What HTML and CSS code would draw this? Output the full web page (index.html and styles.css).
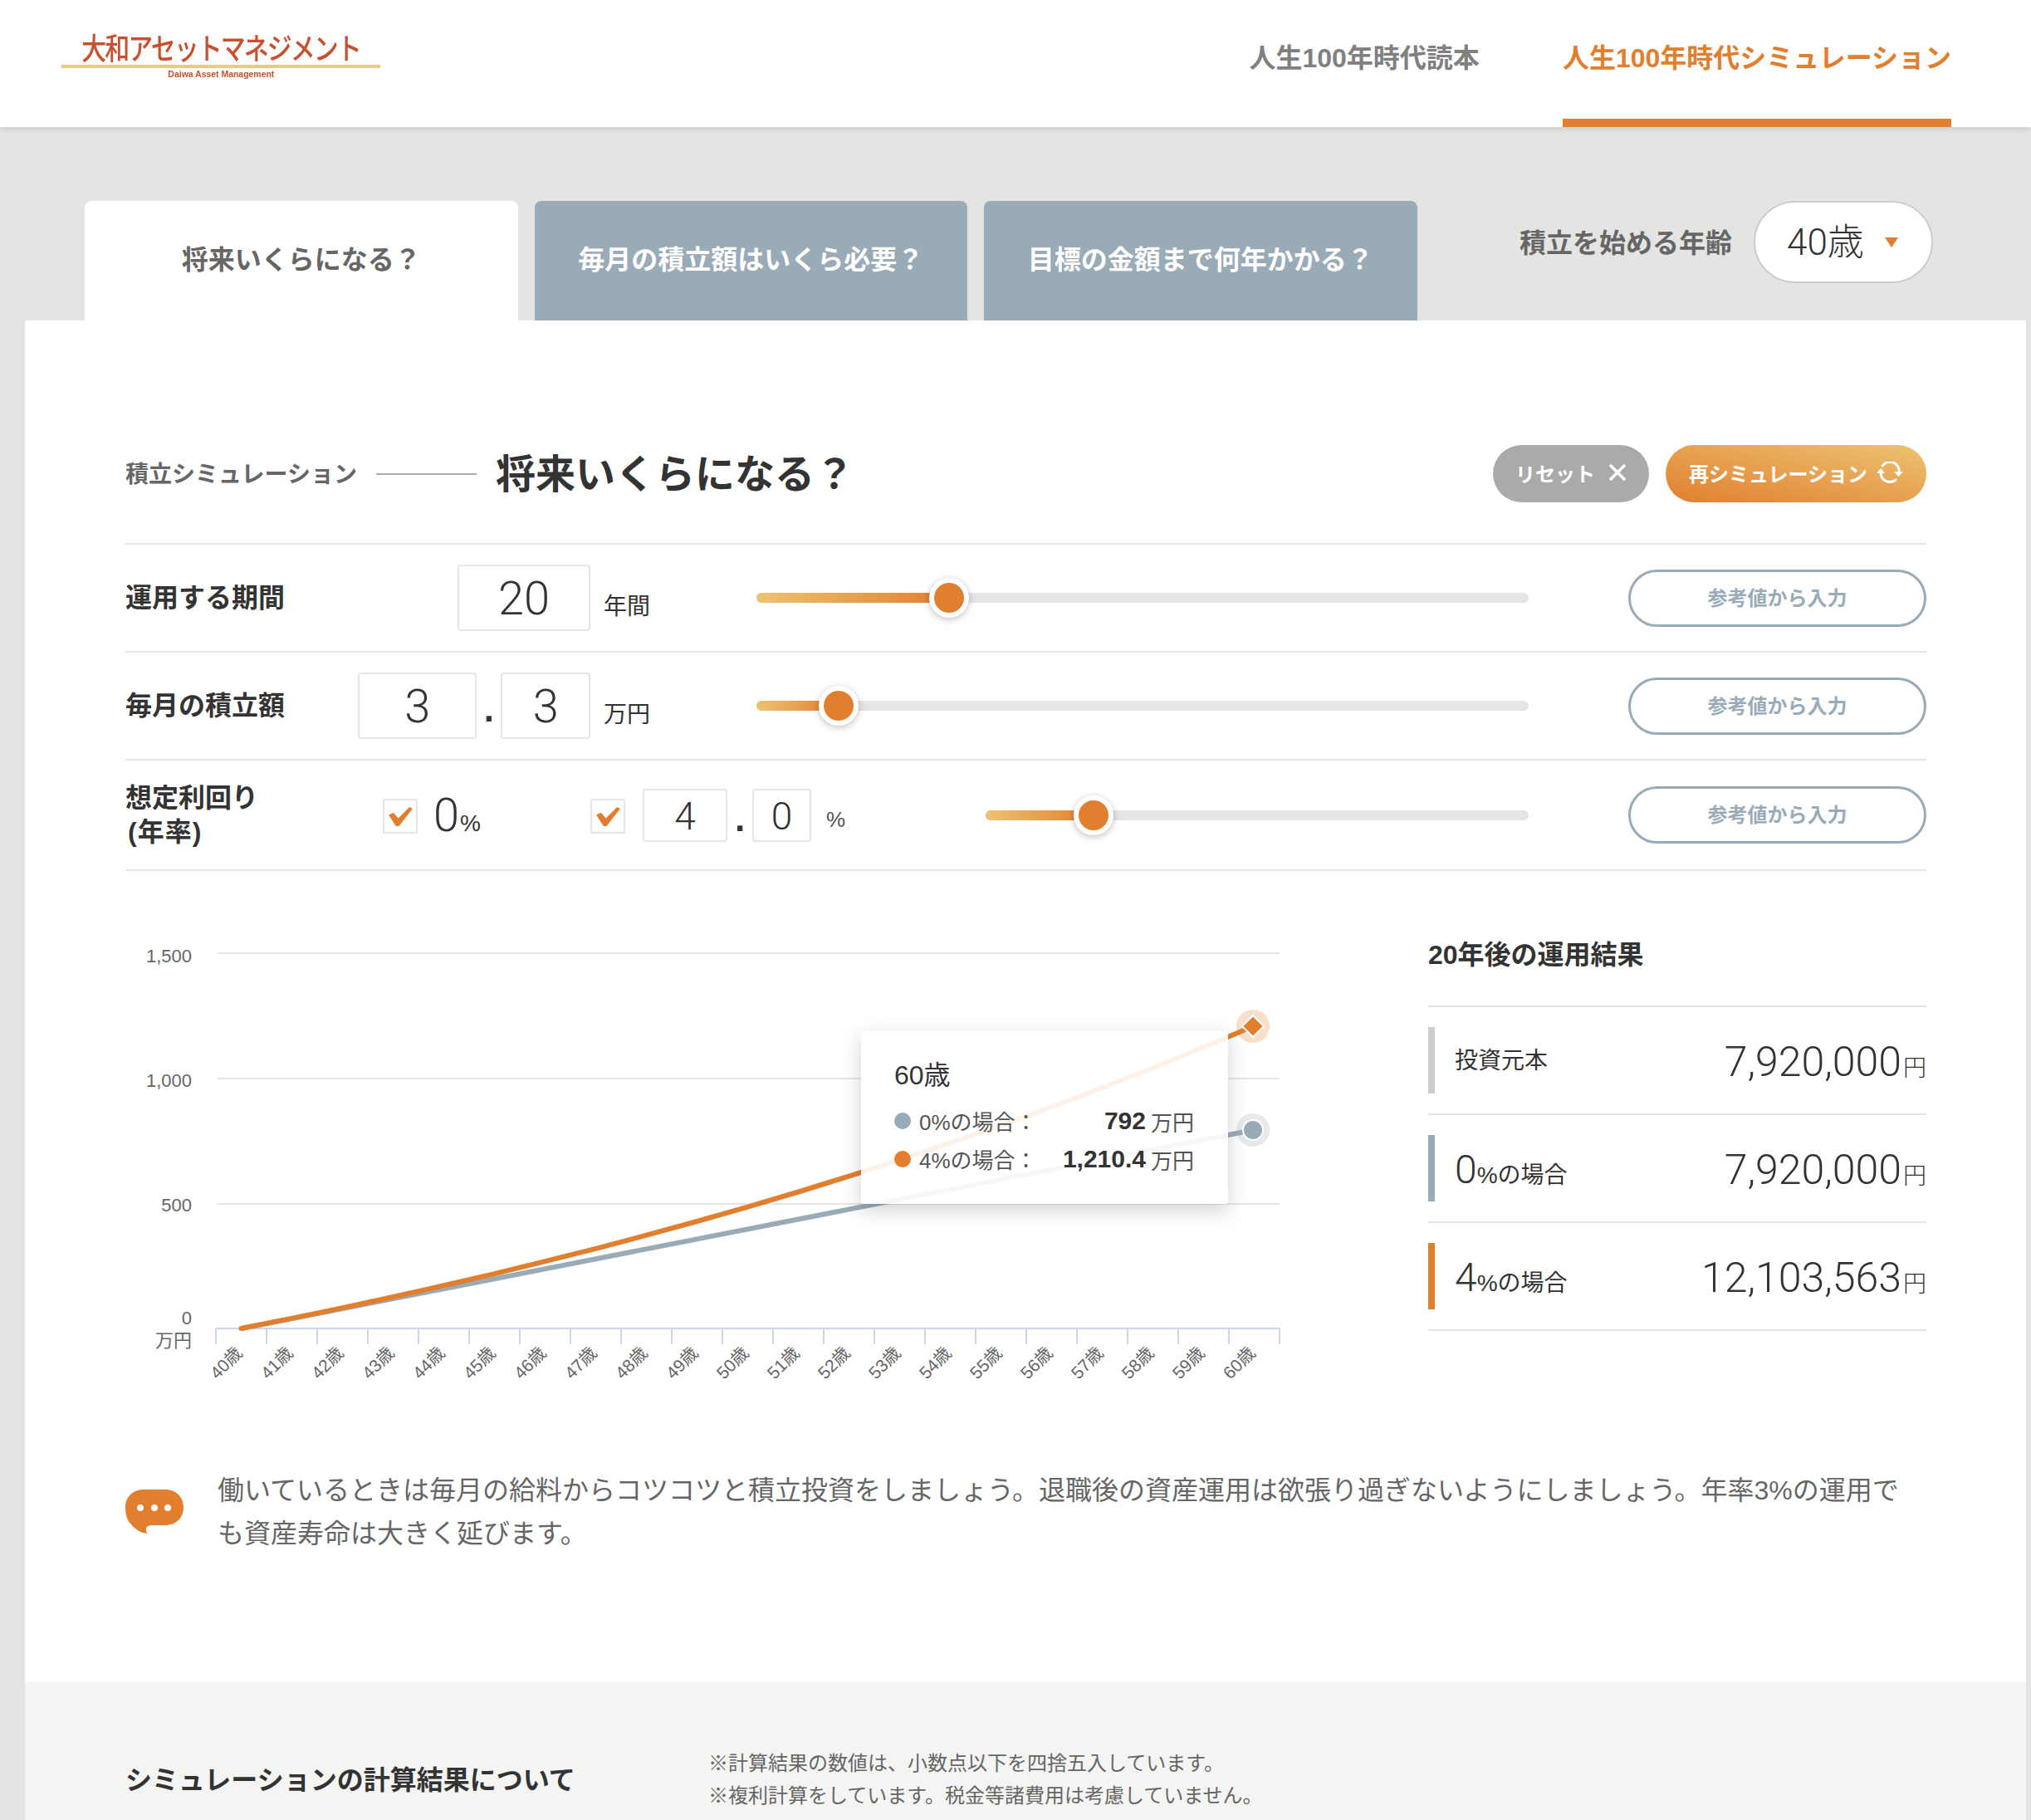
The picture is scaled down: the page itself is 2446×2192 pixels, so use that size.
FILE: index.html
```html
<!DOCTYPE html>
<html lang="ja">

<head>
    <meta charset="UTF-8">
    <meta name="viewport" content="width=device-width, initial-scale=1.0">
    <title>人生100年時代シミュレーション</title>
    <link rel="stylesheet" href="styles.css">
</head>

<body>
    <header class="site-header">
        <a class="logo">
            <span class="logo-name">大和アセットマネジメント</span>
            <span class="logo-rule"></span>
            <span class="logo-sub">Daiwa Asset Management</span>
        </a>
        <nav class="site-nav">
            <a class="nav-item">人生100年時代読本</a>
            <a class="nav-item active">人生100年時代シミュレーション</a>
        </nav>
    </header>

    <div class="tabbar">
        <div class="tab active">将来いくらになる？</div>
        <div class="tab">毎月の積立額はいくら必要？</div>
        <div class="tab">目標の金額まで何年かかる？</div>
        <div class="age">
            <span class="age-label">積立を始める年齢</span>
            <div class="age-select">
                <span>40歳</span>
                <svg class="age-arrow" viewBox="0 0 16 12"><polygon points="0,0 16,0 8,12" /></svg>
            </div>
        </div>
    </div>

    <main class="panel">
        <section class="sim">
            <div class="sim-head">
                <span class="sim-kicker">積立シミュレーション</span>
                <span class="sim-line"></span>
                <h1 class="sim-title">将来いくらになる？</h1>
                <div class="sim-actions">
                    <button class="btn btn-reset">リセット
                        <svg class="btn-icon" viewBox="0 0 22 22"><path d="M2 2 L20 20 M20 2 L2 20" /></svg>
                    </button>
                    <button class="btn btn-again">再シミュレーション
                        <svg class="btn-icon wide" viewBox="0 0 32 26">
                            <path d="M6.5 6 A11 11 0 0 1 27 13" />
                            <path d="M24 21 A11 11 0 0 1 5 13.5" />
                            <polygon class="fill" points="21,12 32,12 26.5,18" />
                            <polygon class="fill" points="0,14 10,14 5,8" />
                        </svg>
                    </button>
                </div>
            </div>

            <div class="row">
                <div class="row-label">運用する期間</div>
                <div class="row-inputs">
                    <div class="box box-wide">20</div>
                </div>
                <div class="row-unit">年間</div>
                <div class="slider">
                    <div class="slider-fill" style="width: 24.9%"></div>
                    <div class="slider-thumb" style="left: 24.9%"></div>
                </div>
                <button class="btn-ref">参考値から入力</button>
            </div>

            <div class="row">
                <div class="row-label">毎月の積立額</div>
                <div class="row-inputs">
                    <div class="box box-int">3</div>
                    <span class="box-dot">.</span>
                    <div class="box box-dec">3</div>
                </div>
                <div class="row-unit">万円</div>
                <div class="slider">
                    <div class="slider-fill" style="width: 10.6%"></div>
                    <div class="slider-thumb" style="left: 10.6%"></div>
                </div>
                <button class="btn-ref">参考値から入力</button>
            </div>

            <div class="row row-rate">
                <div class="row-label rate-label">想定利回り<br><span class="rate-paren">(年率)</span></div>
                <div class="check">
                    <svg viewBox="0 0 30 24"><polygon points="0,10 6,7 12,14 26,0 30,2 13,24 9,24" /></svg>
                </div>
                <div class="rate-fixed"><span class="num">0</span><span class="pct">%</span></div>
                <div class="check">
                    <svg viewBox="0 0 30 24"><polygon points="0,10 6,7 12,14 26,0 30,2 13,24 9,24" /></svg>
                </div>
                <div class="box box-small box-r1">4</div>
                <span class="box-dot dot-small">.</span>
                <div class="box box-small box-r2">0</div>
                <span class="rate-pct">%</span>
                <div class="slider slider-short">
                    <div class="slider-fill" style="width: 19.9%"></div>
                    <div class="slider-thumb" style="left: 19.9%"></div>
                </div>
                <button class="btn-ref">参考値から入力</button>
            </div>

            <div class="result-area">
                <div class="chart">
                    <svg class="chart-svg" viewBox="151 1100 1440 580">
                        <path class="grid" d="M262 1148 H1541 M262 1299 H1541 M262 1450 H1541" />
                        <path class="axis" d="M260 1600 H1541 M260 1600 V1619 M321 1600 V1619 M382 1600 V1619 M443 1600 V1619 M504 1600 V1619 M565 1600 V1619 M626 1600 V1619 M687 1600 V1619 M748 1600 V1619 M809 1600 V1619 M870 1600 V1619 M931 1600 V1619 M992 1600 V1619 M1053 1600 V1619 M1114 1600 V1619 M1175 1600 V1619 M1236 1600 V1619 M1297 1600 V1619 M1358 1600 V1619 M1419 1600 V1619 M1480 1600 V1619 M1541 1600 V1619" />
                        <text class="y-label" x="231" y="1159">1,500</text>
                        <text class="y-label" x="231" y="1309">1,000</text>
                        <text class="y-label" x="231" y="1459">500</text>
                        <text class="y-label" x="231" y="1595">0</text>
                        <text class="y-label" x="231" y="1622">万円</text>

                        <g class="x-labels">
                            <text transform="translate(293 1631) rotate(-45)">40歳</text>
                            <text transform="translate(354 1631) rotate(-45)">41歳</text>
                            <text transform="translate(415 1631) rotate(-45)">42歳</text>
                            <text transform="translate(476 1631) rotate(-45)">43歳</text>
                            <text transform="translate(537 1631) rotate(-45)">44歳</text>
                            <text transform="translate(598 1631) rotate(-45)">45歳</text>
                            <text transform="translate(659 1631) rotate(-45)">46歳</text>
                            <text transform="translate(720 1631) rotate(-45)">47歳</text>
                            <text transform="translate(781 1631) rotate(-45)">48歳</text>
                            <text transform="translate(842 1631) rotate(-45)">49歳</text>
                            <text transform="translate(903 1631) rotate(-45)">50歳</text>
                            <text transform="translate(964 1631) rotate(-45)">51歳</text>
                            <text transform="translate(1025 1631) rotate(-45)">52歳</text>
                            <text transform="translate(1086 1631) rotate(-45)">53歳</text>
                            <text transform="translate(1147 1631) rotate(-45)">54歳</text>
                            <text transform="translate(1208 1631) rotate(-45)">55歳</text>
                            <text transform="translate(1269 1631) rotate(-45)">56歳</text>
                            <text transform="translate(1330 1631) rotate(-45)">57歳</text>
                            <text transform="translate(1391 1631) rotate(-45)">58歳</text>
                            <text transform="translate(1452 1631) rotate(-45)">59歳</text>
                            <text transform="translate(1513 1631) rotate(-45)">60歳</text>
                        </g>

                        <polyline class="line-zero" points="290.5,1600 1509.5,1361" />
                        <polyline class="line-four" points="290.5,1600 351.5,1587.9 412.5,1575.2 473.5,1562 534.5,1548.3 595.5,1534.1 656.5,1519.2 717.5,1503.8 778.5,1487.7 839.5,1471 900.5,1453.6 961.5,1435.5 1022.5,1416.6 1083.5,1397 1144.5,1376.6 1205.5,1355.3 1266.5,1333.2 1327.5,1310.2 1388.5,1286.2 1449.5,1261.3 1509.5,1236" />

                        <circle class="halo-zero" cx="1509" cy="1361" r="20" />
                        <circle class="dot-zero" cx="1509" cy="1361" r="12" />
                        <circle class="halo-four" cx="1509" cy="1236" r="20" />
                        <polygon class="dot-four" points="1509,1223 1522,1236 1509,1249 1496,1236" />
                    </svg>

                    <div class="tooltip">
                        <div class="tooltip-head">60歳</div>
                        <div class="tooltip-row">
                            <i class="tooltip-dot zero"></i>
                            <span class="tooltip-name">0%の場合：</span>
                            <b>792</b><span class="tooltip-unit">万円</span>
                        </div>
                        <div class="tooltip-row">
                            <i class="tooltip-dot four"></i>
                            <span class="tooltip-name">4%の場合：</span>
                            <b>1,210.4</b><span class="tooltip-unit">万円</span>
                        </div>
                    </div>
                </div>

                <div class="results">
                    <h2 class="results-title">20年後の運用結果</h2>
                    <div class="result">
                        <i class="result-bar grey"></i>
                        <span class="result-name plain">投資元本</span>
                        <span class="result-value">7,920,000<small>円</small></span>
                    </div>
                    <div class="result">
                        <i class="result-bar blue"></i>
                        <span class="result-name"><span class="num">0</span>%の場合</span>
                        <span class="result-value">7,920,000<small>円</small></span>
                    </div>
                    <div class="result">
                        <i class="result-bar orange"></i>
                        <span class="result-name"><span class="num">4</span>%の場合</span>
                        <span class="result-value">12,103,563<small>円</small></span>
                    </div>
                </div>
            </div>

            <div class="comment">
                <svg class="comment-icon" viewBox="0 0 70 54">
                    <path d="M22 0 H48 C61 0 70 9 70 21.5 C70 34 61 43 48 43 H32 C27 43 22 46 26.5 53 C18 52 12 48 7 42 C2 37 0 30 0 21.5 C0 9 9 0 22 0 Z" />
                    <circle cx="18" cy="22" r="4" />
                    <circle cx="35" cy="22" r="4" />
                    <circle cx="51" cy="22" r="4" />
                </svg>
                <p class="comment-text">働いているときは毎月の給料からコツコツと積立投資をしましょう。退職後の資産運用は欲張り過ぎないようにしましょう。年率3%の運用でも資産寿命は大きく延びます。</p>
            </div>
        </section>

        <section class="about">
            <h2 class="about-title">シミュレーションの計算結果について</h2>
            <div class="about-notes">
                <p>※計算結果の数値は、小数点以下を四捨五入しています。</p>
                <p>※複利計算をしています。税金等諸費用は考慮していません。</p>
            </div>
        </section>
    </main>
</body>

</html>
```

FILE: styles.css
```css
body {
    font-family: 'Liberation Sans', 'Noto Sans CJK JP', sans-serif;
    background: #e4e4e2;
    margin: 0;
    height: 2192px;
    overflow: hidden;
    color: #333;
}

h1, h2, p {
    margin: 0;
}

button {
    font-family: inherit;
    cursor: pointer;
}

.num,
.box,
.age-select span,
.result-value {
    font-family: Roboto, 'Noto Sans CJK JP', sans-serif;
    font-weight: 300;
}

/* header */
.site-header {
    display: flex;
    justify-content: space-between;
    height: 153px;
    padding: 0 96px 0 74px;
    background: #fff;
    box-shadow: 0 2px 8px rgba(0, 0, 0, 0.12);
    position: relative;
}

.logo {
    display: flex;
    flex-direction: column;
    align-items: center;
    width: 384px;
    padding-top: 38px;
    color: #c8502e;
    filter: blur(0.4px);
}

.logo-name {
    font-size: 30px;
    line-height: 40px;
    letter-spacing: -2px;
    font-weight: 500;
    transform: scaleY(1.2) translateY(2px);
}

.logo-rule {
    width: 100%;
    height: 4px;
    background: #e6cb85;
}

.logo-sub {
    font-size: 11px;
    line-height: 12px;
    font-weight: bold;
    margin-top: 1px;
    transform: scaleX(0.95);
}

.site-nav {
    display: flex;
    gap: 100px;
}

.nav-item {
    font-size: 32px;
    font-weight: bold;
    line-height: 140px;
    height: 153px;
    box-sizing: border-box;
    color: #808080;
}

.nav-item.active {
    color: #e17f2f;
    border-bottom: 10px solid #e17f2f;
}

/* tabs */
.tabbar {
    display: flex;
    gap: 20px;
    height: 144px;
    padding: 89px 118px 0 102px;
}

.tab {
    width: 521.5px;
    height: 144px;
    line-height: 142px;
    text-align: center;
    font-size: 32px;
    font-weight: bold;
    color: #fff;
    background: #9aabb8;
    border-radius: 8px 8px 0 0;
}

.tab.active {
    color: #666;
    background: #fff;
}

.age {
    display: flex;
    align-items: center;
    align-self: flex-start;
    gap: 26px;
    margin-left: auto;
}

.age-label {
    font-size: 32px;
    font-weight: bold;
    color: #666;
    padding-bottom: 4px;
}

.age-select {
    display: flex;
    align-items: center;
    box-sizing: border-box;
    width: 216px;
    height: 99px;
    padding: 0 0 7px 38px;
    font-size: 44px;
    background: #fff;
    border: 2px solid #ccc;
    border-radius: 50px;
}

.age-arrow {
    width: 16px;
    height: 12px;
    margin: 7px 0 0 25px;
    fill: #e17f2f;
}

/* panel */
.panel {
    width: 2410px;
    height: 1806px;
    margin-left: 30px;
    background: #fff;
}

.sim {
    height: 1640px;
    box-sizing: border-box;
    padding: 150px 120px 0 121px;
}

.sim-head {
    display: flex;
    align-items: center;
    height: 69px;
    margin-bottom: 49px;
}

.sim-kicker {
    font-size: 28px;
    font-weight: bold;
    color: #666;
    padding-bottom: 3px;
}

.sim-line {
    width: 121px;
    height: 2px;
    margin: 0 26px 0 23px;
    background: #aaa;
}

.sim-title {
    font-size: 48px;
    font-weight: bold;
    margin-left: -3px;
    padding-bottom: 8px;
}

.sim-actions {
    display: flex;
    gap: 20px;
    margin-left: auto;
}

.btn {
    display: flex;
    align-items: center;
    justify-content: center;
    height: 69px;
    padding: 0 0 3px;
    border: none;
    border-radius: 35px;
    color: #fff;
    font-size: 24px;
    font-weight: bold;
}

.btn-reset {
    width: 188px;
    background: #aaa;
}

.btn-again {
    width: 314px;
    background: linear-gradient(to top right, #e17f2f, #ecc372);
}

.btn-icon {
    width: 22px;
    height: 22px;
    margin-left: 16px;
    fill: none;
    stroke: #fff;
    stroke-width: 3.5;
}

.btn-icon.wide {
    width: 32px;
    height: 26px;
    margin-left: 11px;
    stroke-width: 3;
}

.btn-icon .fill {
    fill: #fff;
    stroke: none;
}

/* input rows */
.row {
    display: flex;
    align-items: center;
    height: 130px;
    box-sizing: border-box;
    border-top: 2px solid #e5e5e5;
}

.row-label {
    width: 280px;
    font-size: 32px;
    font-weight: bold;
    padding-bottom: 6px;
}

.row-inputs {
    display: flex;
    justify-content: flex-end;
    align-items: center;
    width: 280px;
}

.box {
    box-sizing: border-box;
    height: 80px;
    line-height: 79px;
    text-align: center;
    font-size: 56px;
    border: 2px solid #e5e5e5;
    border-radius: 4px;
}

.box-wide { width: 160px; }
.box-int { width: 144px; }
.box-dec { width: 108px; }

.box-dot {
    width: 29px;
    text-align: center;
    font-size: 44px;
    font-weight: bold;
    line-height: 80px;
    padding-top: 8px;
}

.row-unit {
    width: 184px;
    padding: 16px 0 0 16px;
    font-size: 28px;
}

.slider {
    position: relative;
    width: 930px;
    height: 12px;
    margin-right: 120px;
    background: #e5e5e5;
    border-radius: 6px;
}

.slider-short {
    width: 654px;
}

.slider-fill {
    height: 100%;
    background: linear-gradient(to right, #ecc372, #e17f2f);
    border-radius: 6px 0 0 6px;
}

.slider-thumb {
    position: absolute;
    top: 50%;
    width: 36px;
    height: 36px;
    margin: -24px 0 0 -24px;
    background: #e17f2f;
    border: 6px solid #fff;
    border-radius: 50%;
    box-shadow: 0 2px 8px rgba(0, 0, 0, 0.25);
}

.btn-ref {
    width: 359px;
    height: 69px;
    padding: 0 0 4px;
    font-size: 24px;
    font-weight: bold;
    color: #9aabb8;
    background: #fff;
    border: 3px solid #9aabb8;
    border-radius: 35px;
}

.row-rate {
    height: 133px;
}

.rate-label {
    width: 310px;
    line-height: 41px;
    padding-bottom: 0;
}

.rate-paren {
    margin-left: 3px;
    letter-spacing: 1px;
}

.check {
    display: flex;
    align-items: center;
    justify-content: center;
    box-sizing: border-box;
    width: 42px;
    height: 42px;
    margin-top: 3px;
    border: 2px solid #e5e5e5;
    border-radius: 3px;
}

.check svg {
    width: 29px;
    height: 23px;
    fill: #e17f2f;
}

.rate-fixed {
    width: 208px;
    padding-left: 19px;
    box-sizing: border-box;
    color: #333;
}

.rate-fixed .num {
    font-size: 56px;
}

.rate-fixed .pct {
    font-size: 28px;
    margin-left: 1px;
}

.box-small {
    height: 64px;
    line-height: 62px;
    font-size: 46px;
}

.box-r1 {
    width: 102px;
    margin-left: 21px;
}

.box-r2 {
    width: 71px;
}

.dot-small {
    width: 30px;
    line-height: 64px;
}

.rate-pct {
    width: 210px;
    padding: 12px 0 0 18px;
    box-sizing: border-box;
    font-size: 26px;
    color: #555;
}

/* chart and results */
.result-area {
    display: flex;
    border-top: 2px solid #e5e5e5;
    padding-top: 51px;
}

.chart {
    position: relative;
    width: 1569px;
    height: 580px;
}

.chart-svg {
    display: block;
    width: 1440px;
    height: 580px;
}

.grid {
    fill: none;
    stroke: #e6e6e6;
    stroke-width: 2;
}

.axis {
    fill: none;
    stroke: #ccd6eb;
    stroke-width: 2;
}

.y-label {
    font-size: 22px;
    fill: #666;
    text-anchor: end;
}

.x-labels text {
    font-size: 21px;
    fill: #666;
    text-anchor: end;
}

.line-zero,
.line-four {
    fill: none;
    stroke-width: 6;
    stroke-linecap: round;
    stroke-linejoin: round;
}

.line-zero { stroke: #9aabb8; }
.line-four { stroke: #e17f2f; }

.halo-zero { fill: #9aabb8; opacity: 0.25; }
.halo-four { fill: #e17f2f; opacity: 0.25; }

.dot-zero,
.dot-four {
    stroke: #fff;
    stroke-width: 2;
}

.dot-zero { fill: #9aabb8; }
.dot-four { fill: #e17f2f; }

.tooltip {
    position: absolute;
    left: 886px;
    top: 141px;
    box-sizing: border-box;
    width: 442px;
    height: 209px;
    padding: 30px 41px 0 40px;
    background: rgba(255, 255, 255, 0.9);
    border-radius: 4px;
    box-shadow: 0 8px 24px rgba(0, 0, 0, 0.18);
}

.tooltip-head {
    font-size: 32px;
    line-height: 48px;
    margin-bottom: 8px;
}

.tooltip-row {
    display: flex;
    align-items: center;
    height: 46px;
    font-size: 26px;
    color: #555;
}

.tooltip-dot {
    width: 20px;
    height: 20px;
    margin-right: 10px;
    border-radius: 50%;
}

.tooltip-dot.zero { background: #9aabb8; }
.tooltip-dot.four { background: #e17f2f; }

.tooltip-name {
    margin-right: auto;
    padding-bottom: 1px;
}

.tooltip-row b {
    font-size: 30px;
    color: #333;
}

.tooltip-unit {
    margin-left: 6px;
    font-size: 26px;
}

.results {
    width: 600px;
}

.results-title {
    height: 111px;
    box-sizing: border-box;
    padding-top: 26px;
    font-size: 32px;
    line-height: 48px;
}

.result {
    display: flex;
    align-items: center;
    height: 130px;
    box-sizing: border-box;
    border-top: 2px solid #e5e5e5;
}

.result:last-child {
    height: 132px;
    border-bottom: 2px solid #e5e5e5;
}

.result-bar {
    width: 8px;
    height: 80px;
    margin-right: 24px;
}

.result-bar.grey { background: #ccc; }
.result-bar.blue { background: #9aabb8; }
.result-bar.orange { background: #e17f2f; }

.result-name {
    font-size: 28px;
    padding-top: 2px;
}

.result-name.plain {
    padding: 0 0 4px;
}

.result-name .num {
    font-size: 48px;
}

.result-value {
    margin-left: auto;
    padding-top: 4px;
    font-size: 50px;
}

.result-value small {
    font-size: 28px;
    margin-left: 2px;
}

/* comment */
.comment {
    display: flex;
    align-items: center;
    gap: 41px;
    margin-top: 89px;
}

.comment-icon {
    flex: none;
    width: 70px;
    height: 54px;
    fill: #e17f2f;
}

.comment-icon circle {
    fill: #fff;
}

.comment-text {
    width: 2040px;
    font-size: 32px;
    line-height: 52px;
    color: #666;
}

/* footer block */
.about {
    display: flex;
    height: 166px;
    box-sizing: border-box;
    padding: 78px 0 0 121px;
    background: #f4f4f2;
}

.about-title {
    width: 702px;
    font-size: 32px;
    line-height: 40px;
    padding-top: 20px;
}

.about-notes {
    font-size: 24px;
    line-height: 39px;
    color: #666;
}
```
